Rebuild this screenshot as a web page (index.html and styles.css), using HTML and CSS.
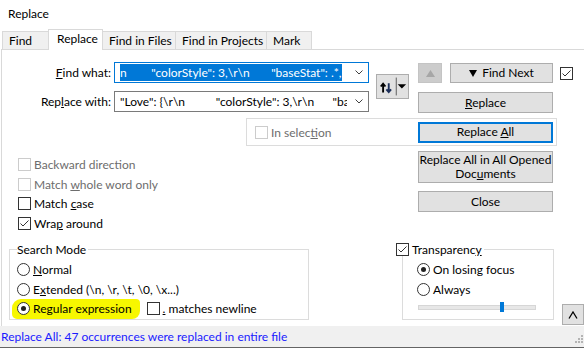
FILE: index.html
```html
<!DOCTYPE html>
<html lang="en">
<head>
    <meta charset="UTF-8">
    <title>Replace</title>
    <link rel="stylesheet" href="styles.css">
</head>
<body>
    <div class="dialog">
        <div class="title">Replace</div>

        <!-- Pestañas -->
        <div class="tabs">
            <div class="tab tab-find">Find</div>
            <div class="tab tab-replace is-active">Replace</div>
            <div class="tab tab-files">Find in Files</div>
            <div class="tab tab-projects">Find in Projects</div>
            <div class="tab tab-mark">Mark</div>
        </div>

        <div class="pane">
            <!-- Campos de busqueda -->
            <div class="top">
                <div class="fields">
                    <div class="field-row">
                        <div class="field-label"><u>F</u>ind what:</div>
                        <div class="combo is-focused">
                            <div class="combo-text"><span class="selected">n        "colorStyle": 3,\r\n       "baseStat": .*,</span></div>
                            <div class="combo-arrow">
                                <svg width="8" height="5" viewBox="0 0 8 5"><polyline points="0.5,0.5 4,4 7.5,0.5" fill="none" stroke="#404040" stroke-width="1"/></svg>
                            </div>
                        </div>
                    </div>
                    <div class="field-row">
                        <div class="field-label">Rep<u>l</u>ace with:</div>
                        <div class="combo">
                            <div class="combo-text">"Love": {\r\n          "colorStyle": 3,\r\n      "baseStat": .*,</div>
                            <div class="combo-arrow">
                                <svg width="8" height="5" viewBox="0 0 8 5"><polyline points="0.5,0.5 4,4 7.5,0.5" fill="none" stroke="#404040" stroke-width="1"/></svg>
                            </div>
                        </div>
                    </div>
                </div>

                <button class="btn swap">
                    <svg width="33" height="25" viewBox="0 0 33 25">
                        <path d="M6.5 19 V10 M4 12.5 L6.5 9.5 L9 12.5" fill="none" stroke="#000" stroke-width="2"/>
                        <path d="M12.5 9 V18 M10 15.5 L12.5 18.5 L15 15.5" fill="none" stroke="#1c2f5a" stroke-width="2"/>
                        <line x1="20.5" y1="3" x2="20.5" y2="22" stroke="#555" stroke-width="1"/>
                        <polygon points="22,10 31,10 26.5,14.5" fill="#000"/>
                    </svg>
                </button>

                <div class="actions">
                    <div class="action-row">
                        <button class="btn btn-up">
                            <svg width="9" height="7" viewBox="0 0 9 7"><polygon points="4.5,0 9,7 0,7" fill="#a6a6a6"/></svg>
                        </button>
                        <button class="btn btn-next">
                            <svg width="8" height="7" viewBox="0 0 8 7"><polygon points="0,0 8,0 4,7" fill="#000"/></svg>
                            <span>Find Next</span>
                        </button>
                        <span class="check is-checked"></span>
                    </div>
                    <button class="btn btn-wide"><span><u>R</u>eplace</span></button>
                </div>
            </div>

            <!-- En seleccion -->
            <div class="selection">
                <label class="option is-disabled"><span class="check"></span><span>In selec<u>t</u>ion</span></label>
                <button class="btn btn-wide is-default"><span>Replace <u>A</u>ll</span></button>
            </div>

            <!-- Opciones -->
            <div class="middle">
                <div class="options">
                    <label class="option is-disabled"><span class="check"></span><span>Backward direction</span></label>
                    <label class="option is-disabled"><span class="check"></span><span>Match <u>w</u>hole word only</span></label>
                    <label class="option"><span class="check"></span><span>Match <u>c</u>ase</span></label>
                    <label class="option"><span class="check is-checked"></span><span>Wra<u>p</u> around</span></label>
                </div>
                <div class="side-buttons">
                    <button class="btn btn-wide btn-tall"><span>Replace All in All Opened<br>Doc<u>u</u>ments</span></button>
                    <button class="btn btn-wide"><span>Close</span></button>
                </div>
            </div>

            <!-- Modo de busqueda y transparencia -->
            <div class="bottom">
                <div class="group group-mode">
                    <div class="group-title">Search Mode</div>
                    <label class="option"><span class="radio"></span><span><u>N</u>ormal</span></label>
                    <label class="option"><span class="radio"></span><span>E<u>x</u>tended (\n, \r, \t, \0, \x...)</span></label>
                    <div class="option">
                        <span class="marker"><span class="radio is-checked"></span><span>Re<u>g</u>ular expression</span></span>
                        <span class="check check-newline"></span><span><u>.</u> matches newline</span>
                    </div>
                </div>

                <div class="group group-transparency">
                    <div class="group-title group-title-check"><span class="check is-checked"></span><span>Transparenc<u>y</u></span></div>
                    <label class="option"><span class="radio is-checked"></span><span>On losing focus</span></label>
                    <label class="option"><span class="radio"></span><span>Always</span></label>
                    <div class="slider">
                        <span class="slider-thumb"></span>
                    </div>
                </div>

                <button class="btn btn-collapse">
                    <svg width="10" height="8" viewBox="0 0 10 8"><polyline points="1,7.5 5,1 9,7.5" fill="none" stroke="#000" stroke-width="1.3"/></svg>
                </button>
            </div>
        </div>

        <!-- Barra de estado -->
        <div class="status">
            <span class="status-text">Replace All: 47 occurrences were replaced in entire file</span>
            <svg class="grip" width="10" height="10" viewBox="0 0 10 10" fill="#b4b4b4">
                <rect x="8" y="0" width="2" height="2"/>
                <rect x="5" y="3" width="2" height="2"/><rect x="8" y="3" width="2" height="2"/>
                <rect x="2" y="6" width="2" height="2"/><rect x="5" y="6" width="2" height="2"/><rect x="8" y="6" width="2" height="2"/>
            </svg>
        </div>
    </div>
</body>
</html>
```

FILE: styles.css
```css
/* Estilos base */
body {
    margin: 0;
    padding: 0;
    background: #fff;
    font-family: Lato, "Noto Sans", sans-serif;
    font-size: 12px;
    color: #000;
    overflow: hidden;
}

.dialog {
    width: 584px;
    height: 350px;
    overflow: hidden;
}

.title {
    height: 29px;
    line-height: 28px;
    padding-left: 8px;
}

/* Pestañas */
.tabs {
    display: flex;
    align-items: flex-end;
    height: 20px;
    padding-left: 2px;
}

.tab {
    box-sizing: border-box;
    height: 18px;
    line-height: 17px;
    padding-left: 6px;
    background: #f0f0f0;
    border: 1px solid #d9d9d9;
    border-bottom: none;
    border-right: none;
    white-space: nowrap;
}

.tab-find { width: 46px; }
.tab-files { width: 72px; }
.tab-projects { width: 91px; }
.tab-mark { width: 46px; border-right: 1px solid #d9d9d9; }

.tab.is-active {
    position: relative;
    z-index: 1;
    width: 55px;
    height: 21px;
    margin-bottom: -1px;
    line-height: 18px;
    padding-left: 8px;
    background: #fff;
    border-right: 1px solid #d9d9d9;
}

.tab.is-active + .tab {
    border-left: none;
}

/* Panel principal */
.pane {
    box-sizing: border-box;
    height: 277px;
    margin-left: 1px;
    border-top: 1px solid #d9d9d9;
    border-left: 1px solid #d9d9d9;
}

.top {
    display: flex;
    padding-top: 12px;
}

.fields {
    display: flex;
    flex-direction: column;
    gap: 8px;
}

.field-row {
    display: flex;
    align-items: center;
}

.field-label {
    box-sizing: border-box;
    width: 112px;
    padding-right: 3px;
    text-align: right;
}

.combo {
    box-sizing: border-box;
    display: flex;
    align-items: center;
    width: 255px;
    height: 21px;
    border: 1px solid #7a7a7a;
}

.combo.is-focused {
    border-color: #0078d7;
}

.combo-text {
    width: 227px;
    margin-left: 5px;
    overflow: hidden;
    white-space: pre;
    line-height: 17px;
}

.selected {
    background: #0078d7;
    color: #fff;
    padding: 1px 0;
}

.combo-arrow {
    flex: 1;
    display: flex;
    justify-content: center;
    padding-left: 2px;
}

/* Botones */
.btn {
    box-sizing: border-box;
    display: flex;
    align-items: center;
    justify-content: center;
    gap: 5px;
    padding: 0;
    margin: 0;
    background: #e1e1e1;
    border: 1px solid #adadad;
    font: inherit;
    color: #000;
    line-height: 14px;
    text-align: center;
}

.swap {
    width: 33px;
    height: 25px;
    margin: 12px 0 0 7px;
}

.actions {
    display: flex;
    flex-direction: column;
    gap: 9px;
    margin-left: 9px;
    padding-top: 1px;
}

.action-row {
    display: flex;
    align-items: center;
}

.btn-up {
    width: 24px;
    height: 20px;
    background: #cccccc;
    border-color: #c4c4c4;
}

.btn-next {
    width: 103px;
    height: 20px;
    margin-left: 8px;
}

.action-row .check {
    margin-left: 7px;
}

.btn-wide {
    width: 135px;
    height: 21px;
}

.btn-tall {
    height: 32px;
}

.btn.is-default {
    border: 2px solid #0078d7;
}

/* Casillas y radios */
.check,
.radio {
    box-sizing: border-box;
    display: inline-block;
    flex: none;
    width: 13px;
    height: 13px;
    margin-right: 3px;
    border: 1px solid #333;
    background: #fff;
    position: relative;
}

.check.is-checked::after {
    content: "";
    position: absolute;
    left: 1px;
    top: 1px;
    width: 9px;
    height: 9px;
    background: url("data:image/svg+xml,%3Csvg xmlns='http://www.w3.org/2000/svg' width='9' height='9'%3E%3Cpolyline points='0.5,4.5 3,7 8.5,1.5' fill='none' stroke='%23333' stroke-width='1'/%3E%3C/svg%3E");
}

.radio {
    border-radius: 50%;
}

.radio.is-checked::after {
    content: "";
    position: absolute;
    left: 3px;
    top: 3px;
    width: 5px;
    height: 5px;
    border-radius: 50%;
    background: #222;
}

.option {
    display: flex;
    align-items: center;
    height: 19.5px;
    white-space: nowrap;
}

.option.is-disabled {
    color: #6d6d6d;
}

.option.is-disabled .check {
    border-color: #cccccc;
}

/* Caja de seleccion */
.selection {
    box-sizing: border-box;
    display: flex;
    align-items: center;
    justify-content: space-between;
    width: 311px;
    height: 28px;
    margin: 5px 0 0 244px;
    padding: 0 3px 0 8px;
    border: 1px solid #dcdcdc;
}

/* Opciones */
.middle {
    display: flex;
    margin-top: 5px;
}

.options {
    width: 400px;
    margin-left: 16px;
    padding-top: 4px;
}

.side-buttons {
    display: flex;
    flex-direction: column;
    gap: 8px;
}

/* Grupos inferiores */
.bottom {
    display: flex;
    align-items: flex-start;
    margin-top: 16px;
}

.group {
    box-sizing: border-box;
    height: 71px;
    border: 1px solid #dcdcdc;
}

.group-title {
    display: flex;
    align-items: center;
    width: max-content;
    height: 14px;
    margin: -8px 0 4px 7px;
    padding-right: 2px;
    background: #fff;
}

.group-mode {
    width: 300px;
    margin-left: 7px;
}

.group-mode .option {
    padding-left: 7px;
}

.marker {
    display: flex;
    align-items: center;
    height: 20px;
    margin-left: -5px;
    padding: 0 8px 0 5px;
    background: #f7f700;
    border-radius: 9px 4px 8px 5px;
}

.check-newline {
    margin-left: 7px;
}

.group-transparency {
    width: 152px;
    margin-left: 93px;
}

.group-title-check {
    margin-left: -7px;
}

.group-transparency .option {
    padding-left: 14px;
}

.slider {
    position: relative;
    box-sizing: border-box;
    width: 118px;
    height: 5px;
    margin: 6px 0 0 15px;
    background: #e7e7e7;
    border: 1px solid #d6d6d6;
}

.slider-thumb {
    position: absolute;
    left: 81px;
    top: -4px;
    width: 4px;
    height: 10px;
    background: #0078d7;
}

.btn-collapse {
    width: 22px;
    height: 21px;
    margin: 55px 0 0 8px;
}

/* Barra de estado */
.status {
    box-sizing: border-box;
    display: flex;
    justify-content: space-between;
    align-items: flex-end;
    height: 22px;
    padding: 0 1px 2px 1px;
    background: #f0f0f0;
    border-bottom: 1px solid #646464;
}

.status-text {
    align-self: center;
    padding-top: 2px;
    color: #1a1aff;
}
```
